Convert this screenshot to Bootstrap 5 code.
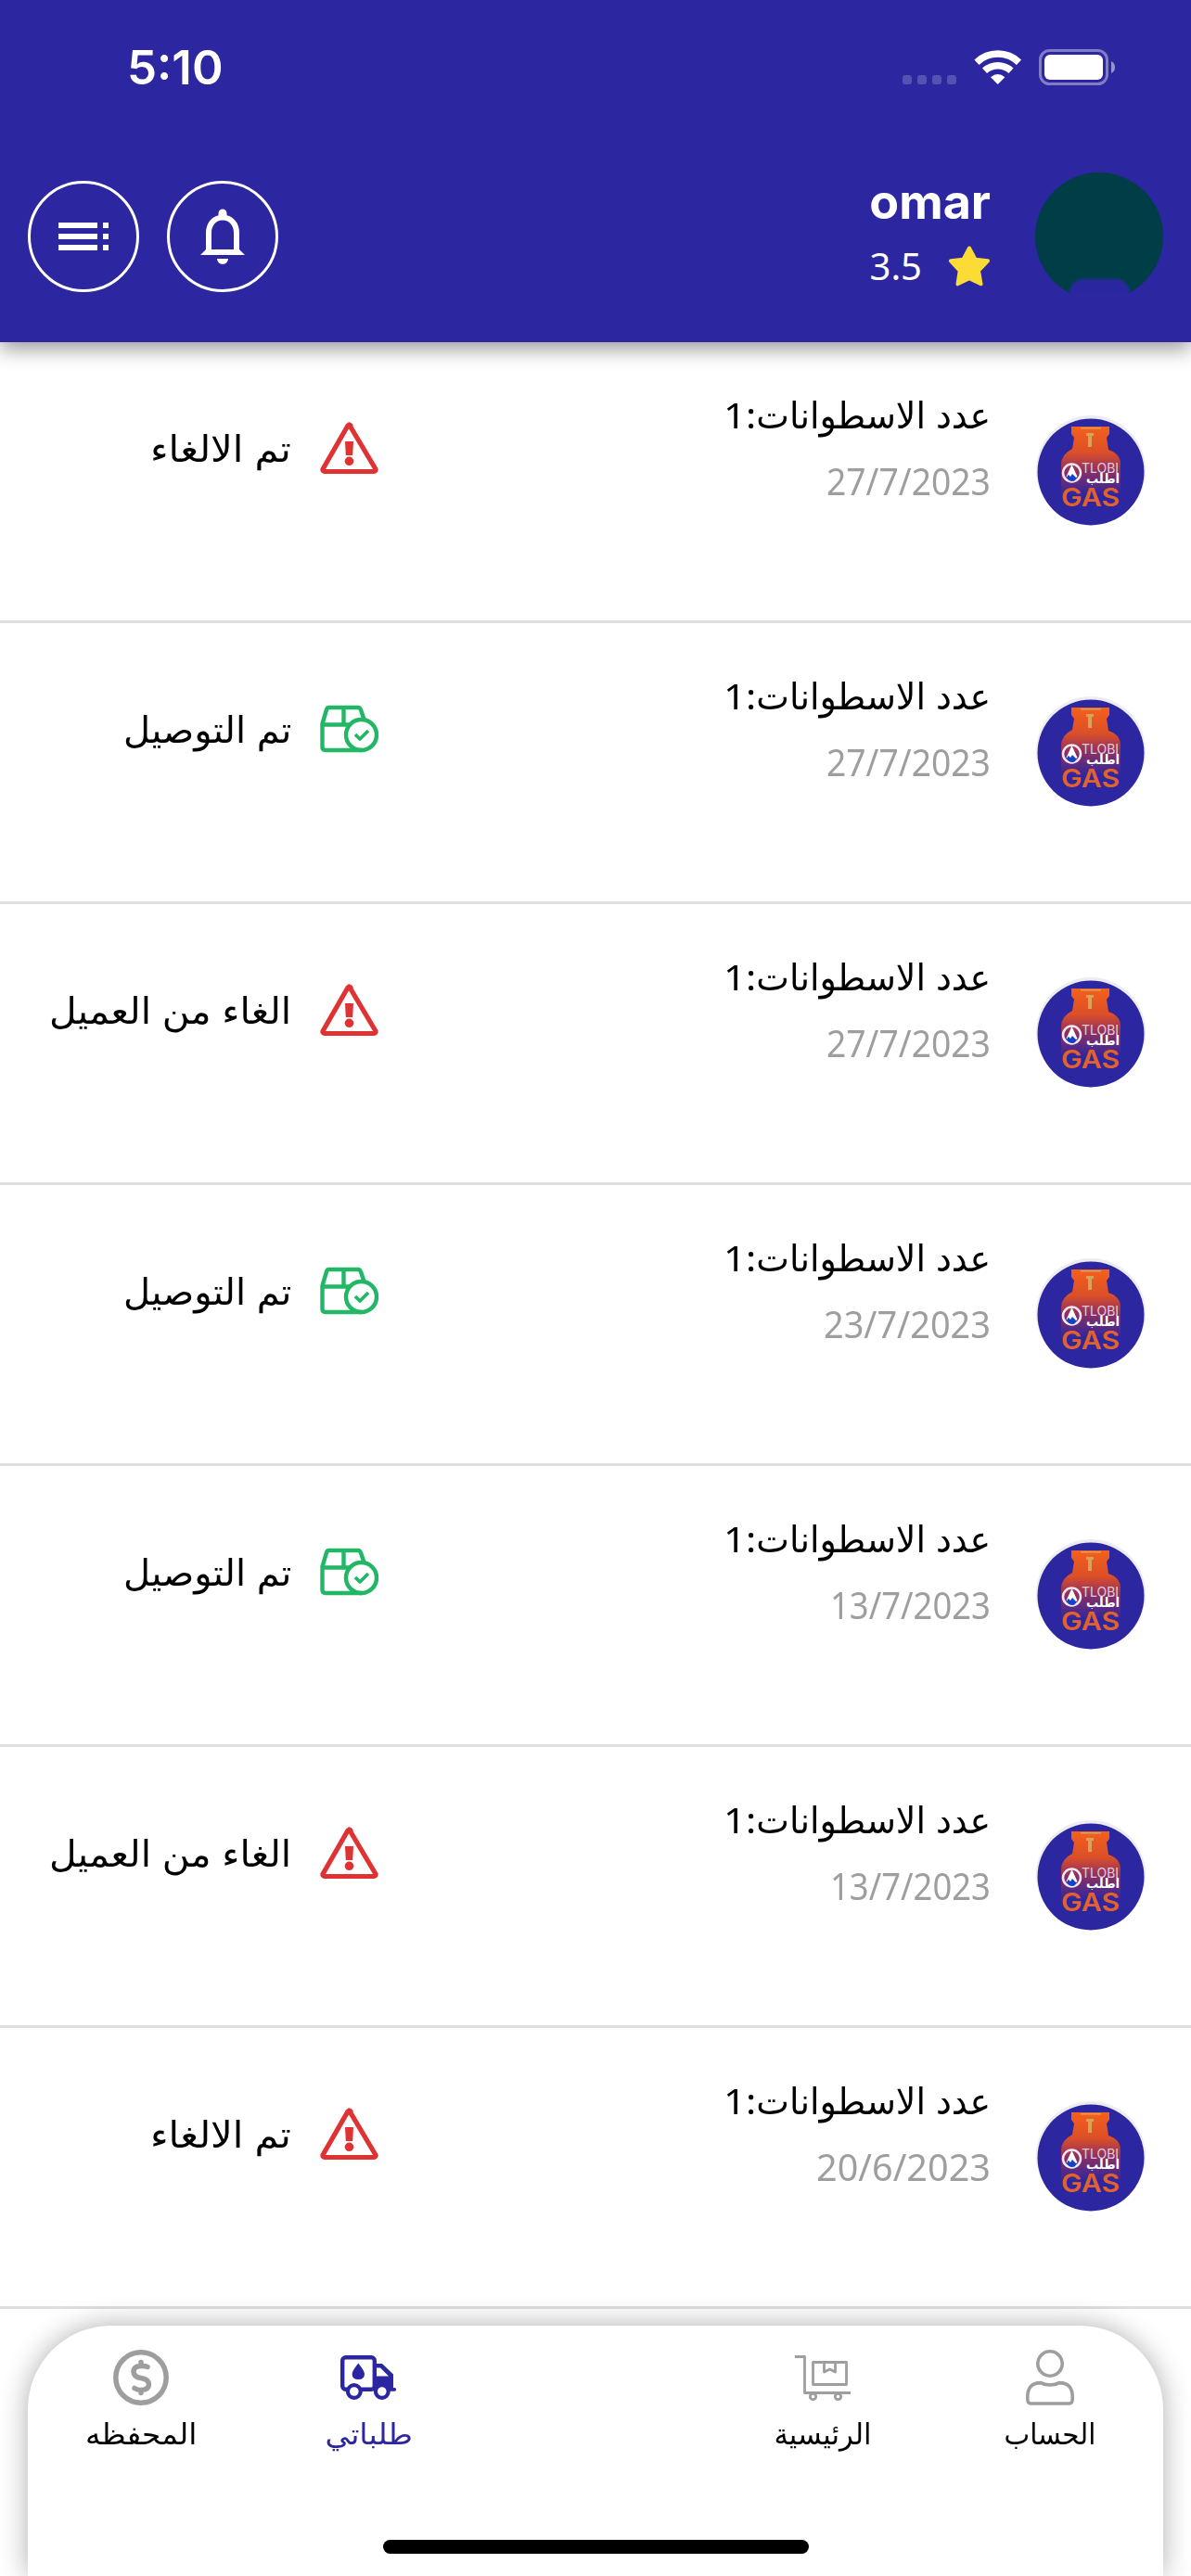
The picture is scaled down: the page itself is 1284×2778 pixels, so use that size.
<!DOCTYPE html>
<html lang="ar" dir="rtl">
<head>
  <meta charset="UTF-8">
  <meta name="viewport" content="width=device-width, initial-scale=1.0">
  <title>طلباتي</title>
  <!-- Bootstrap CSS -->
  <link href="https://cdn.jsdelivr.net/npm/bootstrap@5.3.2/dist/css/bootstrap.min.css" rel="stylesheet">
  <style>
    body {
      width: 1284px;
      height: 2778px;
      overflow: hidden;
      background: #fff;
      color: #000;
      font-family: "Noto Sans", "DejaVu Sans", sans-serif;
      font-stretch: condensed;
    }
    svg {
      display: block;
      flex: none;
    }
    .app-header {
      height: 369px;
      background: #2c26a0;
      box-shadow: 0 8px 20px rgba(0, 0, 0, 0.38);
      position: relative;
      z-index: 1;
    }
    .status-bar {
      height: 141px;
      padding: 53px 82px 0 137px;
    }
    .clock {
      font: 600 51px/40px Inter, sans-serif;
    }
    .profile-bar {
      padding: 45px 30px 0;
    }
    .header-buttons {
      gap: 30px;
    }
    .round-btn {
      width: 120px;
      height: 120px;
      margin-top: 9px;
      border: 3px solid #fff;
    }
    .profile-info {
      padding: 6px 48px 0 0;
    }
    .user-name {
      font: 700 52px/52px Inter, sans-serif;
    }
    .user-rating {
      font-size: 40px;
      line-height: 54px;
      margin-top: 16px;
    }
    .rating-value {
      margin-right: 28px;
    }
    .order-row {
      height: 303px;
      border-bottom: 3px solid #dedede;
      padding-right: 48px;
    }
    .order-logo {
      margin-top: 79px;
    }
    .order-info {
      width: 420px;
      padding: 48px 48px 0 0;
    }
    .order-count,
    .order-status {
      font-size: 39px;
      line-height: 60px;
    }
    .order-date {
      font-size: 40px;
      line-height: 60px;
      margin-top: 12px;
      color: #9e9e9e;
    }
    .order-state {
      width: 408px;
      padding-top: 84px;
      margin-right: auto;
    }
    .order-status {
      margin-right: 31px;
    }
    .fit {
      display: inline-block;
      white-space: nowrap;
      transform-origin: right center;
    }
    .bottom-bar {
      height: 270px;
      margin: 18px 30px 0;
      padding-top: 26px;
      border-radius: 90px 90px 0 0;
      background: #fff;
      box-shadow: 0 0 30px rgba(0, 0, 0, 0.32);
    }
    .tab-item {
      flex: 1 1 0;
      color: #000;
    }
    .tab-item svg {
      color: #9e9e9e;
    }
    .tab-item.active,
    .tab-item.active svg {
      color: #2c26a0;
    }
    .tab-text {
      font-size: 31px;
      line-height: 44px;
      margin-top: 8px;
    }
    .tab-text .fit {
      transform-origin: center;
    }
    .home-line {
      width: 459px;
      height: 15px;
      margin-top: 93px;
      background: #000;
    }
  </style>
</head>
<body>
  <!-- Shared symbols -->
  <svg width="0" height="0" class="position-absolute">
    <defs>
      <linearGradient id="tank" x1="0" y1="0" x2="0" y2="1">
        <stop offset="0" stop-color="#f4601c"/>
        <stop offset=".32" stop-color="#dc4f28"/>
        <stop offset=".55" stop-color="#8e2f60"/>
        <stop offset=".85" stop-color="#2c26a0"/>
      </linearGradient>
      <symbol id="logo" viewBox="0 0 120 120">
        <circle cx="60" cy="59" r="59" fill="#ececf2"/>
        <circle cx="60" cy="61" r="57.500" fill="#2c26a0"/>
        <path d="M39 12h41v8l-3 4 1 6 1 7q13 4 13 16v46H28V53q0-11 12-17l1-6 1-6-3-4z" fill="url(#tank)"/>
        <path d="M49 13h22v1.500H49zM55 19h8v3h-2v12h-4V22h-2z" fill="#d7a25a"/>
        <circle cx="39.500" cy="62" r="9.500" fill="none" stroke="#f1e8f3" stroke-width="2.500"/>
        <path d="M39.500 53l6 13q-6 6-12 0z" fill="#fff"/>
        <path d="M34 67q1-3 2-3l2 2 2-3 4 4q0 4-4 4t-6-4z" fill="#1540c8"/>
        <text x="50" y="62" direction="ltr" font-family="Inter, sans-serif" font-size="14" textLength="40" lengthAdjust="spacingAndGlyphs" fill="#e0ccdf">TLOBI</text>
        <text x="91" y="73" direction="rtl" font-family="DejaVu Sans, sans-serif" font-size="14" font-weight="700" textLength="36" lengthAdjust="spacingAndGlyphs" fill="#fff">اطلب</text>
        <text x="28" y="98" direction="ltr" font-family="Inter, sans-serif" font-size="27" font-weight="600" textLength="63" lengthAdjust="spacingAndGlyphs" fill="#e2622c">GAS</text>
      </symbol>
      <symbol id="cancelled" viewBox="0 0 63 56">
        <path d="M31.500 3L60 51a2 2 0 0 1-2 2.500H5A2 2 0 0 1 3 51L30 4a2 2 0 0 1 3 0z" fill="none" stroke="#df3232" stroke-width="5.200" stroke-linejoin="round"/>
        <path d="M27 21h9l-.8 15h-7.400z" fill="#df3232"/>
        <circle cx="31.500" cy="42.300" r="4.800" fill="#df3232"/>
      </symbol>
      <symbol id="delivered" viewBox="0 0 63 51">
        <g fill="none" stroke="#22b766" stroke-width="4.400" stroke-linejoin="round">
          <path d="M48 17l-4-12q-1-2.500-3-2.500H10q-2.500 0-3 2.500L2.500 20v25q0 3.500 3.500 3.500h39M2.500 21h30M25.500 3v18"/>
          <circle cx="44.500" cy="32" r="16.500"/>
          <path d="M38 31.500l5 5 9-9" stroke-width="3.800"/>
        </g>
      </symbol>
    </defs>
  </svg>

  <!-- Header -->
  <header class="app-header text-white">
    <div class="status-bar d-flex justify-content-between" dir="ltr">
      <div class="clock">5:10</div>
      <svg width="230" height="40" viewBox="0 0 230 40">
        <g fill="#fff" fill-opacity=".2">
          <rect x="1" y="28" width="10" height="10" rx="3"/>
          <rect x="17" y="28" width="10" height="10" rx="3"/>
          <rect x="33" y="28" width="10" height="10" rx="3"/>
          <rect x="49" y="28" width="10" height="10" rx="3"/>
        </g>
        <g fill="none" stroke="#fff" stroke-width="7.500">
          <path d="M81 14.200a33 33 0 0 1 45.500 0"/>
          <path d="M89.500 23.300a21 21 0 0 1 28.500 0"/>
        </g>
        <path d="M96 30.300q7.700-6.400 15.400 0L103.700 38z" fill="#fff"/>
        <rect x="149.500" y="1.500" width="72" height="36" rx="10" fill="none" stroke="#fff" stroke-opacity=".4" stroke-width="3"/>
        <rect x="154" y="6" width="63" height="27" rx="6" fill="#fff"/>
        <path d="M226 13q4 2 4 6.500t-4 6.500z" fill="#fff" fill-opacity=".5"/>
      </svg>
    </div>
    <div class="profile-bar d-flex align-items-start">
      <svg width="138" height="138" viewBox="0 0 138 138">
        <defs>
          <filter id="soft"><feGaussianBlur stdDeviation="1.500"/></filter>
          <clipPath id="cut"><rect width="138" height="130"/></clipPath>
        </defs>
        <g clip-path="url(#cut)">
          <circle cx="69" cy="69" r="69" fill="#003e47"/>
          <rect x="37" y="115" width="65" height="40" rx="15" fill="#2c26a0" filter="url(#soft)"/>
        </g>
      </svg>
      <div class="profile-info flex-grow-1">
        <div class="user-name">omar</div>
        <div class="user-rating d-flex align-items-center">
          <svg width="46" height="44" viewBox="0 0 46 44">
            <path d="M23 2.500l6.500 12.300 13.500 1.500-10 10.500 2.500 14.500L23 35.200 10.500 41.300 12.700 27 3 16.300l13.500-1.500z" fill="#fbdb35" stroke="#fbdb35" stroke-width="4" stroke-linejoin="round"/>
          </svg>
          <span class="fit rating-value" data-width="56">3.5</span>
        </div>
      </div>
      <div class="header-buttons d-flex">
        <div class="round-btn rounded-circle d-flex align-items-center justify-content-center">
          <svg width="72" height="72" viewBox="0 0 24 24" fill="#fff">
            <path d="M18 17v-6c0-3.070-1.640-5.640-4.500-6.320V4c0-.83-.67-1.500-1.500-1.500s-1.500.67-1.500 1.500v.68C7.630 5.360 6 7.920 6 11v6l-2 2h16zM16 17H8v-6c0-2.480 1.510-4.500 4-4.500s4 2.020 4 4.500z" transform="translate(0 -.3)"/>
            <path d="M10 20h4a2 2 0 0 1-4 0z"/>
          </svg>
        </div>
        <div class="round-btn rounded-circle d-flex align-items-center justify-content-center">
          <svg width="72" height="72" viewBox="0 0 24 24" fill="#fff">
            <path d="M3 9h14V7H3zM3 13h14v-2H3zM3 17h14v-2H3zM19 7v2h2V7zM19 17h2v-2h-2zM19 13h2v-2h-2z"/>
          </svg>
        </div>
      </div>
    </div>
  </header>

  <!-- Orders, filled by the script -->
  <main id="orders"></main>

  <!-- Bottom navigation -->
  <nav class="bottom-bar">
    <div class="d-flex">
      <div class="tab-item d-flex flex-column align-items-center">
        <svg width="60" height="60" viewBox="0 0 60 60" fill="none" stroke="currentColor" stroke-width="3.600">
          <circle cx="30" cy="15" r="13.200"/>
          <path d="M20 35.600q4 2.400 10 2.400t10-2.400q15 0 14.200 17.400 0 5-3.500 5H9.300q-3.500 0-3.500-5Q5 35.600 20 35.600z" stroke-linejoin="round"/>
        </svg>
        <div class="tab-text"><span class="fit" data-width="99">الحساب</span></div>
      </div>
      <div class="tab-item d-flex flex-column align-items-center">
        <svg width="60" height="60" viewBox="0 0 60 60" fill="none" stroke="currentColor" stroke-width="2.800" stroke-linejoin="round">
          <path d="M0 7.500h10.500V46.500H60M19.500 13.500h36v24h-36zM31.500 14v10l6-3 6 3V14"/>
          <circle cx="19.500" cy="50.500" r="3.200"/>
          <circle cx="46.500" cy="50.500" r="3.200"/>
        </svg>
        <div class="tab-text"><span class="fit" data-width="105">الرئيسية</span></div>
      </div>
      <div class="tab-item"></div>
      <div class="tab-item active d-flex flex-column align-items-center">
        <svg width="60" height="60" viewBox="0 0 60 60">
          <rect x="2.200" y="8.200" width="34.600" height="34.600" rx="3.500" fill="none" stroke="currentColor" stroke-width="4.400"/>
          <path d="M38 15h7L57 26.500V41h1.200a1.800 1.800 0 0 1 0 3.700H38zM39 19.500v9h13l-9-9z" fill="currentColor" fill-rule="evenodd"/>
          <path d="M19.300 14.500Q26 23 26 26q0 6-6.700 6t-6.700-6q0-3 6.700-11.500z" fill="currentColor"/>
          <g fill="#fff" stroke="currentColor" stroke-width="4.200">
            <circle cx="14.800" cy="45" r="6.900"/>
            <circle cx="44.800" cy="45" r="6.900"/>
          </g>
        </svg>
        <div class="tab-text"><span class="fit" data-width="94">طلباتي</span></div>
      </div>
      <div class="tab-item d-flex flex-column align-items-center">
        <svg width="60" height="60" viewBox="0 0 60 60" fill="none" stroke="currentColor" stroke-linecap="round">
          <circle cx="30" cy="30" r="27.200" stroke-width="5.500"/>
          <path d="M37 18.500q-2-1-6-1-9 0-9 6t8 7q8.500 1.500 8.500 7t-8.500 6q-4 0-7-2M30 13.500v3M30 43.500v3" stroke-width="5.500"/>
        </svg>
        <div class="tab-text"><span class="fit" data-width="120">المحفظه</span></div>
      </div>
    </div>
    <div class="home-line rounded-pill mx-auto"></div>
  </nav>

  <script src="https://cdn.jsdelivr.net/npm/bootstrap@5.3.2/dist/js/bootstrap.bundle.min.js"></script>
  <script>
  // width is the printed width of each label
  const states = {
    cancelled: { text: 'تم الالغاء', width: 152, icon: 'cancelled' },
    delivered: { text: 'تم التوصيل', width: 181, icon: 'delivered' },
    byClient: { text: 'الغاء من العميل', width: 261, icon: 'cancelled' }
  };

  const orders = [
    { date: '27/7/2023', width: 177, state: 'cancelled' },
    { date: '27/7/2023', width: 177, state: 'delivered' },
    { date: '27/7/2023', width: 177, state: 'byClient' },
    { date: '23/7/2023', width: 180, state: 'delivered' },
    { date: '13/7/2023', width: 173, state: 'delivered' },
    { date: '13/7/2023', width: 173, state: 'byClient' },
    { date: '20/6/2023', width: 188, state: 'cancelled' }
  ];

  document.getElementById('orders').innerHTML = orders.map(order => {
    const state = states[order.state];
    return `
      <div class="order-row d-flex align-items-start">
        <svg class="order-logo" width="120" height="120"><use href="#logo"/></svg>
        <div class="order-info">
          <div class="order-count"><span class="fit" data-width="288">عدد الاسطوانات:1</span></div>
          <div class="order-date"><bdi class="fit" data-width="${order.width}">${order.date}</bdi></div>
        </div>
        <div class="order-state d-flex align-items-center">
          <svg width="63" height="60"><use href="#${state.icon}"/></svg>
          <div class="order-status"><span class="fit" data-width="${state.width}">${state.text}</span></div>
        </div>
      </div>`;
  }).join('');

  // Scale each label to its printed width
  document.querySelectorAll('.fit').forEach(el => {
    el.style.transform = `scaleX(${el.dataset.width / el.offsetWidth})`;
  });
</script>
</body>
</html>
